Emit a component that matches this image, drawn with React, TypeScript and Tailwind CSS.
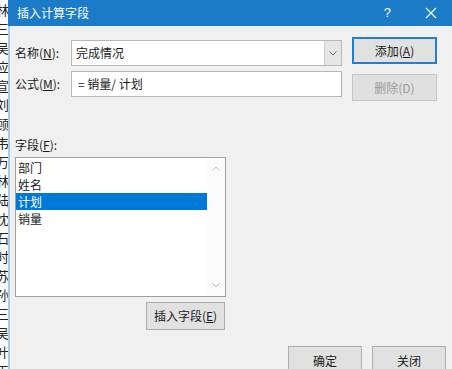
import React from "react";

const stripChars = ["林","三","吴","应","宣","刘","顾","韦","万","林","陆","沈","石","时","苏","孙","三","吴","叶","王"];

const font = { fontFamily: '"Noto Sans CJK SC", "Noto Sans", sans-serif' };

function Btn({ children, className = "" }: { children: React.ReactNode; className?: string }) {
  return (
    <div className={`flex items-center justify-center bg-[#e1e1e1] border border-[#adadad] text-[12px] text-[#1a1a1a] ${className}`}>
      {children}
    </div>
  );
}

export default function App() {
  return (
    <div className="w-[452px] h-[369px] overflow-hidden flex bg-[#f0f0f0]" style={font}>
      {/* background sheet strip */}
      <div className="w-[8px] h-full overflow-hidden bg-white shrink-0 relative">
        <div className="flex flex-col -ml-[4px]">
          {stripChars.map((c, i) => (
            <div key={i} className="h-[19px] leading-[19px] text-[13px] text-[#222]">{c}</div>
          ))}
        </div>
      </div>
      <div className="w-[2px] h-full bg-[#a9cbea] shrink-0" />
      {/* dialog */}
      <div className="flex-1 flex flex-col">
        <div className="h-[26px] bg-[#1b7bc6] flex items-center text-white shrink-0 -ml-[2px]">
          <div className="pl-[9px] text-[12px] flex-1">插入计算字段</div>
          <div className="text-[13px] mr-[34px]" style={{ fontFamily: '"Liberation Sans", sans-serif' }}>?</div>
          <svg width="12" height="12" viewBox="0 0 12 12" className="mr-[15px]">
            <path d="M1 1 L11 11 M11 1 L1 11" stroke="white" strokeWidth="1.2" />
          </svg>
        </div>
        <div className="flex-1 flex flex-col pl-[5px] text-[12px] text-[#1a1a1a]">
          {/* top section */}
          <div className="flex mt-[11px]">
            <div className="flex flex-col gap-[5px] mt-[3px]">
              <div className="flex items-center h-[26px]">
                <div className="w-[56px]">名称(<u>N</u>):</div>
                <div className="w-[271px] h-[26px] bg-white border border-[#b7b7b7] flex items-center">
                  <div className="flex-1 pl-[4px] text-[12px]">完成情况</div>
                  <div className="w-[17px] h-full bg-[#e6e6e6] border-l border-[#cfcfcf] flex items-center justify-center">
                    <svg width="8" height="5" viewBox="0 0 8 5"><path d="M0.5 0.5 L4 4 L7.5 0.5" stroke="#606060" fill="none" strokeWidth="1" /></svg>
                  </div>
                </div>
              </div>
              <div className="flex items-center h-[26px]">
                <div className="w-[56px]">公式(<u>M</u>):</div>
                <div className="w-[271px] h-[26px] bg-white border border-[#b7b7b7] flex items-center pl-[6px]">= 销量/ 计划</div>
              </div>
            </div>
            <div className="flex flex-col gap-[10px] ml-[10px]">
              <div className="w-[85px] h-[27px] flex items-center justify-center bg-[#e1e1e1] border-2 border-[#1f7fd6] text-[12px] text-[#1a1a1a]">添加(<u>A</u>)</div>
              <div className="w-[85px] h-[27px] flex items-center justify-center bg-[#e0e0e0] border border-[#c6c6c6] text-[12px] text-[#9a9a9a]">删除(D)</div>
            </div>
          </div>
          {/* fields */}
          <div className="mt-[36px] leading-[16px]">字段(<u>F</u>):</div>
          <div className="mt-[4px] w-[211px] h-[140px] bg-white border border-[#a0a0a0] flex">
            <div className="flex-1 flex flex-col pt-[1px]">
              {["部门","姓名","计划","销量"].map((t, i) => (
                <div key={i} className={`h-[17px] leading-[17px] pl-[2px] ${i === 2 ? "bg-[#0078d7] text-white" : ""}`}>{t}</div>
              ))}
            </div>
            <div className="w-[18px] h-full flex flex-col items-center justify-between py-[8px] bg-[#fbfbfb]">
              <svg width="8" height="5" viewBox="0 0 8 5"><path d="M0.5 4.5 L4 1 L7.5 4.5" stroke="#c0c0c0" fill="none" strokeWidth="1" /></svg>
              <svg width="8" height="5" viewBox="0 0 8 5"><path d="M0.5 0.5 L4 4 L7.5 0.5" stroke="#c0c0c0" fill="none" strokeWidth="1" /></svg>
            </div>
          </div>
          <div className="flex mt-[5px]">
            <Btn className="w-[79px] h-[28px] ml-[131px]">插入字段(<u>E</u>)</Btn>
          </div>
          <div className="flex mt-[16px] ml-[273px] gap-[10px]">
            <Btn className="w-[74px] h-[28px] items-start pt-[5px]">确定</Btn>
            <Btn className="w-[74px] h-[28px] items-start pt-[5px]">关闭</Btn>
          </div>
        </div>
      </div>
    </div>
  );
}
